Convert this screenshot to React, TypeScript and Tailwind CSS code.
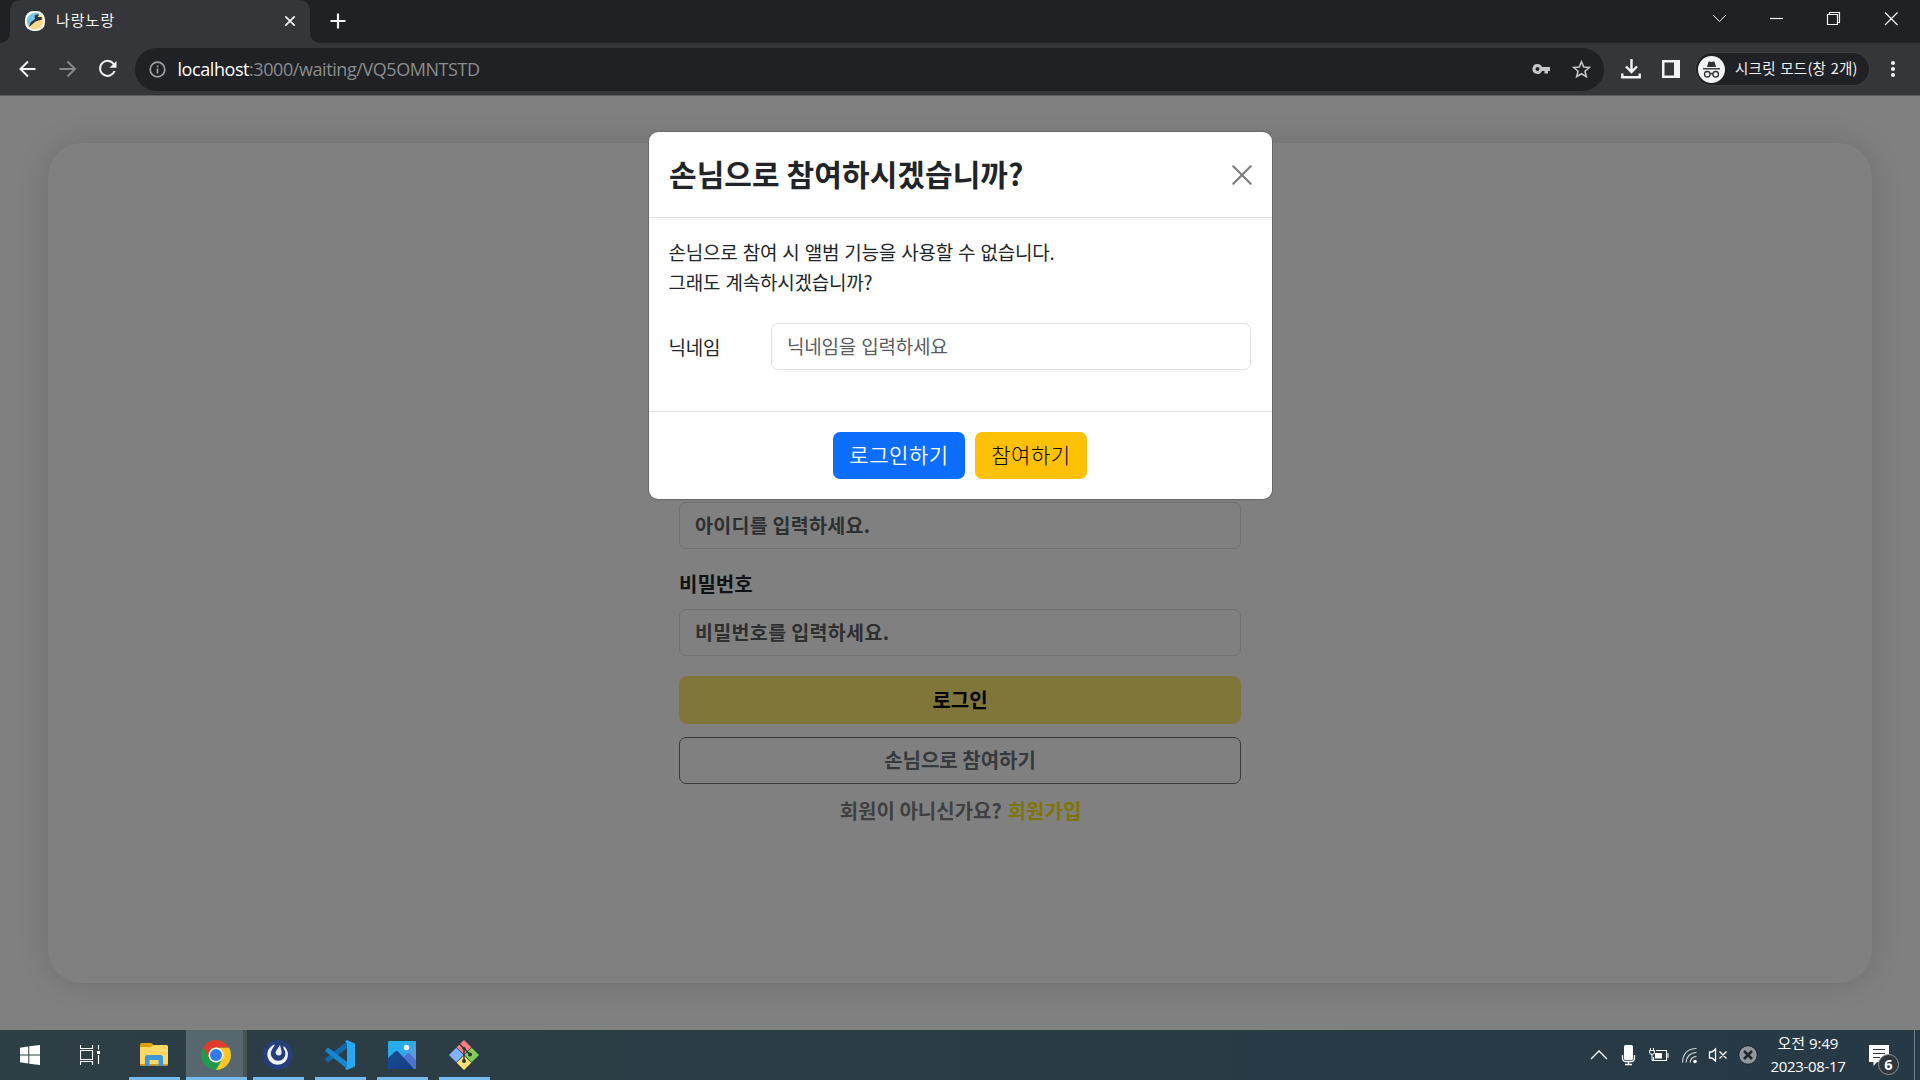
import React from "react";

const KR = "font-['Noto_Sans_CJK_KR',sans-serif]";

function Favicon() {
  return (
    <svg className="ml-[15px] size-5 shrink-0" viewBox="0 0 20 20">
      <rect width="20" height="20" rx="8.5" fill="#fff" />
      <circle cx="10" cy="10" r="8.6" fill="#ffd98c" />
      <path d="M4.500 16.500A8.600 8.600 0 0 1 14.500 2.700L10.500 8.500L6 12.500Z" fill="#74c7ee" />
      <path d="M9.500 4.500L12.500 3.200L14 4L12.500 6L16.500 6L17 8.500L10.500 10.500L7 13.500L4 16L5.500 11.500L10 8Z" fill="#33313a" />
    </svg>
  );
}

function TabStrip() {
  return (
    <div className="flex h-[43px] bg-[#202124]">
      <div className="flex h-full w-[10px] bg-[#35363a]">
        <div className="h-full w-full rounded-br-[10px] bg-[#202124]" />
      </div>
      <div className="flex h-full w-[300px] items-center rounded-t-[10px] bg-[#35363a] pb-[1px]">
        <Favicon />
        <span className={`${KR} -mt-[2px] ml-[11px] w-[212px] text-[15px] leading-5 tracking-[1px] text-[#f5f5f6]`}>나랑노랑</span>
        <svg className="ml-[15px] size-[14px]" viewBox="0 0 14 14" stroke="#f1f3f4" strokeWidth="1.700">
          <path d="M2.300 2.300L11.700 11.700M11.700 2.300L2.300 11.700" />
        </svg>
      </div>
      <div className="h-full w-[10px] bg-[#35363a]">
        <div className="h-full w-full rounded-bl-[10px] bg-[#202124]" />
      </div>
      <svg className="ml-[9.500px] mt-[13px] size-4" viewBox="0 0 16 16" stroke="#f1f3f4" strokeWidth="2.200">
        <path d="M8 .500V15.500M.500 8H15.500" />
      </svg>
      <svg className="ml-auto mr-[19px] mt-[9px] h-[20px] w-[190px]" viewBox="1711 9 190 20" fill="none" stroke="#f4f4f4" strokeWidth="1">
        <path d="M1713 15L1719.500 21.500L1726 15" />
        <path d="M1770 18.500H1783" strokeWidth="1.200" />
        <path d="M1827.500 14.500H1837.500V24.500H1827.500ZM1829.500 14.500V12.500H1839.500V22.500H1837.500" strokeWidth="1.200" />
        <path d="M1885 12.500L1897.500 25M1897.500 12.500L1885 25" strokeWidth="1.200" />
      </svg>
    </div>
  );
}

function IncognitoIcon() {
  return (
    <svg className="size-[27px]" viewBox="0 0 27 27">
      <circle cx="13.500" cy="13.500" r="13.500" fill="#f1f3f4" />
      <path d="M9 11L10.300 6.200Q10.600 5.200 11.600 5.500L13.500 6L15.400 5.500Q16.400 5.200 16.700 6.200L18 11Z" fill="#303134" />
      <path d="M5 12.800H22" stroke="#303134" strokeWidth="1.400" />
      <g fill="none" stroke="#303134" strokeWidth="1.300">
        <circle cx="9.300" cy="18.300" r="2.800" />
        <circle cx="17.700" cy="18.300" r="2.800" />
        <path d="M12.100 18Q13.500 17 14.900 18" />
      </g>
    </svg>
  );
}

function Toolbar() {
  return (
    <div className="flex h-[53px] items-center border-b border-[#5b5c60] bg-[#35363a]">
      <svg className="ml-[18px] h-[20px] w-[100px]" viewBox="18 59 100 20" fill="none" strokeWidth="2">
        <path d="M35.500 69H21M28 61.500L20.500 69L28 76.500" stroke="#f1f3f4" />
        <path d="M59.500 69H74M67.500 61.500L75 69L67.500 76.500" stroke="#85878a" />
        <path d="M113.800 64.200A7.500 7.500 0 1 0 114.600 71" stroke="#f1f3f4" />
        <path d="M116.500 61V67.800H109.500Z" fill="#f1f3f4" />
      </svg>
      <div className="ml-[17px] flex h-[43px] w-[1469px] items-center rounded-full bg-[#202124]">
        <svg className="ml-[14px] size-[17px]" viewBox="0 0 17 17" fill="none" stroke="#9aa0a6" strokeWidth="1.700">
          <circle cx="8.500" cy="8.500" r="7.300" />
          <path d="M8.500 7.500V12.500M8.500 4.500V6.200" />
        </svg>
        <span className="ml-[11.500px] font-['Open_Sans',sans-serif] text-[18px] leading-6 tracking-[-0.430px] text-[#8a8d90]">
          <span className="text-white">localhost</span>:3000/waiting/VQ5OMNTSTD
        </span>
        <svg className="ml-auto mr-[13px] h-[20px] w-[60px]" viewBox="1531 59 60 20" fill="none">
          <path fillRule="evenodd" fill="#c4c7c9" d="M1537.500 64A5 5 0 1 0 1542 71H1544.500V73.500H1548V71H1550V67H1542A5 5 0 0 0 1537.500 64ZM1537.500 67A2 2 0 1 1 1537.500 71A2 2 0 1 1 1537.500 67Z" />
          <path stroke="#c4c7c9" strokeWidth="1.600" d="M1581.500 61.800L1583.700 67L1589.300 67.500L1585 71.200L1586.300 76.700L1581.500 73.800L1576.700 76.700L1578 71.200L1573.700 67.500L1579.300 67Z" />
        </svg>
      </div>
      <svg className="ml-[16px] h-[22px] w-[62px]" viewBox="1620 58 62 22" fill="none">
        <path stroke="#f1f3f4" strokeWidth="2.400" d="M1631.500 59V72M1626 66.500L1631.500 72L1637 66.500M1622.300 73.500V77.300H1639.700V73.500" />
        <rect x="1662" y="60" width="18" height="18" fill="#f1f3f4" />
        <rect x="1664.500" y="62.500" width="9.500" height="13" fill="#35363a" />
      </svg>
      <div className="ml-[13px] flex h-[34px] w-[175px] items-center rounded-full border border-[#3f4044] bg-[#202124] pl-[2px]">
        <IncognitoIcon />
        <span className={`${KR} -mt-[2px] ml-[10px] whitespace-nowrap text-[14.500px] leading-5 tracking-[0.250px] text-[#f1f3f4] [word-spacing:1px]`}>시크릿 모드(창 2개)</span>
      </div>
      <svg className="ml-[19.500px] h-[18px] w-[6px]" viewBox="0 0 6 18" fill="#f1f3f4">
        <circle cx="3" cy="3" r="2" />
        <circle cx="3" cy="9" r="2" />
        <circle cx="3" cy="15" r="2" />
      </svg>
    </div>
  );
}

function LoginPage() {
  return (
    <div className="flex h-full px-12 pb-[47px] pt-[47px]">
      <div className={`${KR} flex h-[840px] w-full flex-col items-center rounded-[34px] bg-[#808080] pt-[359px] font-bold shadow-[0_0_30px_rgba(0,0,0,0.15)]`}>
        <div className="flex h-[47px] w-[562px] items-center rounded-[7px] border border-[#707172] px-[15px] pb-[1px] text-[19.500px] tracking-[0.280px] text-[#2d2f31]">
          아이디를 입력하세요.
        </div>
        <div className="mt-[20px] flex h-[30px] w-[562px] items-center text-[20px] text-[#101214]">비밀번호</div>
        <div className="mt-[10px] flex h-[47px] w-[562px] items-center rounded-[7px] border border-[#707172] px-[15px] pb-[1px] text-[19.500px] tracking-[0.350px] text-[#2d2f31]">
          비밀번호를 입력하세요.
        </div>
        <div className="mt-[20px] flex h-[48px] w-[562px] items-center justify-center rounded-[8px] bg-[#80753a] text-[20px] text-black">로그인</div>
        <div className="mt-[13px] flex h-[47px] w-[562px] items-center justify-center rounded-[7px] border border-[#36393d] pb-[2px] text-[20px] text-[#36393d]">
          손님으로 참여하기
        </div>
        <div className="mt-[12px] flex h-[30px] items-center gap-[6px] pl-[1px] text-[20px] text-[#404040]">
          <span>회원이 아니신가요?</span>
          <span className="text-[#807500]">회원가입</span>
        </div>
      </div>
    </div>
  );
}

function GuestModal() {
  return (
    <div className={`${KR} absolute left-[649px] top-[36px] flex h-[367px] w-[623px] flex-col rounded-[9px] bg-white text-[#212529] shadow-[0_0_0_1px_#686868]`}>
      <div className="flex h-[86px] items-center justify-between border-b border-[#dee2e6] pl-5 pr-[20px]">
        <h1 className="-mt-[4px] text-[30px] font-bold leading-[36px] tracking-[0.080px]">손님으로 참여하시겠습니까?</h1>
        <svg className="size-5" viewBox="0 0 20 20" stroke="#7f7f7f" strokeWidth="2.200" strokeLinecap="round">
          <path d="M1.300 1.300L18.700 18.700M18.700 1.300L1.300 18.700" />
        </svg>
      </div>
      <div className="flex h-[193px] flex-col pl-[19.500px] pr-5 pt-[19px] text-[19px] leading-[30px] tracking-[-0.230px] [word-spacing:1.100px]">
        <p>손님으로 참여 시 앨범 기능을 사용할 수 없습니다.</p>
        <p>그래도 계속하시겠습니까?</p>
        <div className="mt-[26px] flex items-center">
          <span className="w-[102.500px]">닉네임</span>
          <div className="flex h-[47px] w-[480px] items-center rounded-[7px] border border-[#dee2e6] px-[15px] pb-[1px] text-[#595c5f]">닉네임을 입력하세요</div>
        </div>
      </div>
      <div className="flex h-[88px] justify-center gap-[10px] border-t border-[#dee2e6] pr-[2px] pt-5 text-[21px] tracking-[0.550px]">
        <div className="flex h-[47px] w-[132px] items-center justify-center rounded-[7px] bg-[#0d6efd] pb-[2px] pl-[1px] text-white [font-weight:350]">로그인하기</div>
        <div className="flex h-[47px] w-[112px] items-center justify-center rounded-[7px] bg-[#ffc107] pb-[2px] pl-[1px] text-black [font-weight:300]">참여하기</div>
      </div>
    </div>
  );
}

function AppSlot({ children, active }: { children: React.ReactNode; active?: boolean }) {
  return (
    <div className={active ? "mr-[6px] flex h-full w-[61px] flex-col bg-[#57676f]" : "mr-[11px] flex h-full w-[51px] flex-col"}>
      <div className={active ? "flex h-[47px] items-center border-r-4 border-[#485354] pl-[15px]" : "flex h-[47px] items-center pl-[10px]"}>
        <svg className="mt-[3px] size-[30px]" viewBox="0 0 30 30">{children}</svg>
      </div>
      <div className="h-[3px] bg-[#76b9ed]" />
    </div>
  );
}

function Taskbar() {
  return (
    <div className="flex h-[50px] bg-linear-to-r from-[#2d3e45] to-[#263945]">
      <svg className="ml-5 mt-[15px] size-5" viewBox="0 0 20 20" fill="#fff">
        <path d="M0 2.700L8.300 1.400V9.500H0ZM9.300 1.200L20 0V9.500H9.300ZM0 10.500H8.300V18.600L0 17.300ZM9.300 10.500H20V20L9.300 18.800Z" />
      </svg>
      <svg className="ml-10 mt-[15px] h-[20px] w-[21px]" viewBox="0 0 21 20" fill="none" stroke="#fff" strokeWidth="1.100">
        <path d="M.500 0V3.500H12.500V0M.500 20V16.500H12.500V20M.500 5.500H12.500V14.500H.500ZM18.500 0V4.500M18.500 10V19" />
        <rect x="17" y="6" width="3" height="3" fill="#fff" stroke="none" />
      </svg>
      <div className="ml-7 flex">
        <AppSlot>
          <path d="M1 5Q1 3 2.500 3H12Q13.500 3 14.500 5.500V9H1Z" fill="#e0a008" />
          <path d="M1 7.500Q1 7 2.500 7H12L14 5H27.500Q29 5 29 6.500V24Q29 25.500 27.500 25.500H2.500Q1 25.500 1 24Z" fill="#ffd764" />
          <path d="M1 24H29V25.500H1Z" fill="#d89b18" />
          <path d="M6 26V17.500Q6 15 8.500 15H21.500Q24 15 24 17.500V26H19.500V20H10.500V26Z" fill="#3c96dc" />
        </AppSlot>
      </div>
      <div className="-ml-[5px] flex">
        <AppSlot active>
          <circle cx="15" cy="15" r="15" fill="#229a4b" />
          <path d="M15 7.500H27.990A15 15 0 0 1 15 30L21.500 18.750Z" fill="#fcc629" />
          <path d="M8.500 18.750L2.010 7.500A15 15 0 0 1 27.990 7.500H15Z" fill="#e13b2e" />
          <path d="M8.500 18.750L2.010 7.500A15 15 0 0 0 0 15Q2 24 8 20Z" fill="#229a4b" />
          <circle cx="15" cy="15" r="7.500" fill="#fff" />
          <circle cx="15" cy="15" r="6" fill="#2f7be8" />
        </AppSlot>
        <AppSlot>
          <circle cx="15" cy="15" r="15" fill="#263f7c" />
          <path d="M12 4.500A10.300 10.300 0 1 0 20.500 6V8.500A7.300 7.300 0 1 1 9 9.500Q10.300 7 12 4.500Z" fill="#f2f2f4" />
          <path d="M17 5L18.500 11Q19.200 15.500 15.500 15.500Q12 15 12.800 11.500Z" fill="#eceef2" />
        </AppSlot>
        <AppSlot>
          <path d="M0 20L3 22.500L23 7.500V.500L1 18Z" fill="#0d6bac" />
          <path d="M.500 10L3 7.500L23 22.500V29.500L.500 11.500Z" fill="#1687d0" />
          <path d="M22 0L30 3.500V26.500L22 30L20 28.500L22 27V3L20 1.500Z" fill="#2aa5f2" />
        </AppSlot>
        <AppSlot>
          <defs>
            <linearGradient id="mountain" x1="0" y1="0" x2="1" y2="1">
              <stop stopColor="#184f98" />
              <stop offset="1" stopColor="#123c82" />
            </linearGradient>
            <linearGradient id="sky" x1="0" y1="0" x2="1" y2="1">
              <stop offset=".4" stopColor="#27ade9" />
              <stop offset="1" stopColor="#9b7fe0" />
            </linearGradient>
          </defs>
          <rect x="1" y="1" width="28" height="28" rx="1" fill="url(#sky)" />
          <path d="M14 19L20.500 13.500Q22 13 23 14L29 20.500V28Q29 29 28 29H14Z" fill="#4b73cf" />
          <path d="M1 18L8 11.500Q9.500 10.500 11 11.500L27 29H2Q1 29 1 28Z" fill="url(#mountain)" />
          <circle cx="19.500" cy="7.500" r="2.700" fill="#f6f6ee" />
        </AppSlot>
        <AppSlot>
          <path d="M15 0L22.300 7.300L15 14.600L7.700 7.300Z" fill="#f77d80" />
          <path d="M7.300 7.700L14.600 15L7.300 22.300L0 15Z" fill="#80b3ff" />
          <path d="M22.700 7.700L30 15L22.700 22.300L15.400 15Z" fill="#7fce58" />
          <path d="M15 15.400L22.300 22.700L15 30L7.700 22.700Z" fill="#ffe072" />
          <path d="M9.500 3L15 8.500V21M15 8.500L21 14.500" fill="none" stroke="#333" strokeWidth="1.400" />
          <circle cx="15" cy="8.500" r="1.600" fill="#333" />
          <circle cx="21" cy="14.500" r="2" fill="#333" />
          <circle cx="15" cy="21" r="2" fill="#333" />
        </AppSlot>
      </div>
      <svg className="ml-auto h-[50px] w-[170px]" viewBox="1590 1030 170 50" fill="none" stroke="#fff" strokeWidth="1.300">
        <path d="M1591 1059L1599 1051L1607 1059" />
        <rect x="1624" y="1045" width="9" height="15" rx="1.500" fill="#fff" stroke="none" />
        <path d="M1622.500 1055V1058Q1622.500 1061.500 1626 1061.500H1631Q1634.500 1061.500 1634.500 1058V1055M1628.500 1061.500V1064.500M1625 1064.500H1632" />
        <path d="M1656 1050.500H1666.500V1060.500H1653.500V1057M1668 1053V1058" strokeWidth="1.100" />
        <path d="M1655 1053H1662V1058.500H1655Z" fill="#fff" stroke="none" />
        <path d="M1649.500 1050.500H1654.500V1052Q1654.500 1054.500 1652 1054.500Q1649.500 1054.500 1649.500 1052ZM1650.500 1048V1050M1653.500 1048V1050M1652 1054.500V1060.500H1654" strokeWidth="1" />
        <g stroke="#c9ced1" strokeWidth="1.200">
          <path d="M1682.500 1062.500Q1683 1049 1696.500 1048.500M1686 1062.500Q1687 1053 1696.500 1052.300M1690 1062.500Q1690.500 1057 1696.500 1056.300" />
        </g>
        <circle cx="1695" cy="1061.500" r="1.800" fill="#fff" stroke="none" />
        <path d="M1709.500 1052H1712L1715.500 1049V1061L1712 1058H1709.500ZM1719.500 1051.500L1726.500 1058.500M1726.500 1051.500L1719.500 1058.500" />
        <circle cx="1748" cy="1055" r="9.300" fill="#8f989e" stroke="#171e22" strokeWidth="1" />
        <path d="M1744 1051L1752 1059M1752 1051L1744 1059" stroke="#20282d" strokeWidth="2.600" />
      </svg>
      <div className="flex w-[96px] flex-col items-center pt-[2px] font-['Open_Sans','Noto_Sans_CJK_KR',sans-serif] text-[15px] leading-[23px] text-white">
        <span className="tracking-[-0.050px]">오전 9:49</span>
        <span className="text-[15px] tracking-[-0.320px]">2023-08-17</span>
      </div>
      <svg className="h-[50px] w-[64px]" viewBox="1856 1030 64 50">
        <path d="M1869 1045H1889V1062H1877L1873.500 1066V1062H1869Z" fill="#fff" />
        <path d="M1873 1049.500H1885M1873 1053.500H1885M1873 1057.500H1880" stroke="#293b45" strokeWidth="1.200" />
        <circle cx="1888.500" cy="1064.500" r="10" fill="#30373b" stroke="#8b9296" strokeWidth="1" />
        <text x="1888.500" y="1069.800" textAnchor="middle" fill="#fff" fontSize="14.500" fontWeight="700" fontFamily="Open Sans, sans-serif">6</text>
        <path d="M1914.500 1030V1080" stroke="#6f7c83" />
      </svg>
    </div>
  );
}

export default function App() {
  return (
    <div className="flex h-[1080px] w-[1920px] flex-col overflow-hidden bg-[#808080]">
      <TabStrip />
      <Toolbar />
      <main className="relative h-[934px]">
        <LoginPage />
        <GuestModal />
      </main>
      <Taskbar />
    </div>
  );
}
